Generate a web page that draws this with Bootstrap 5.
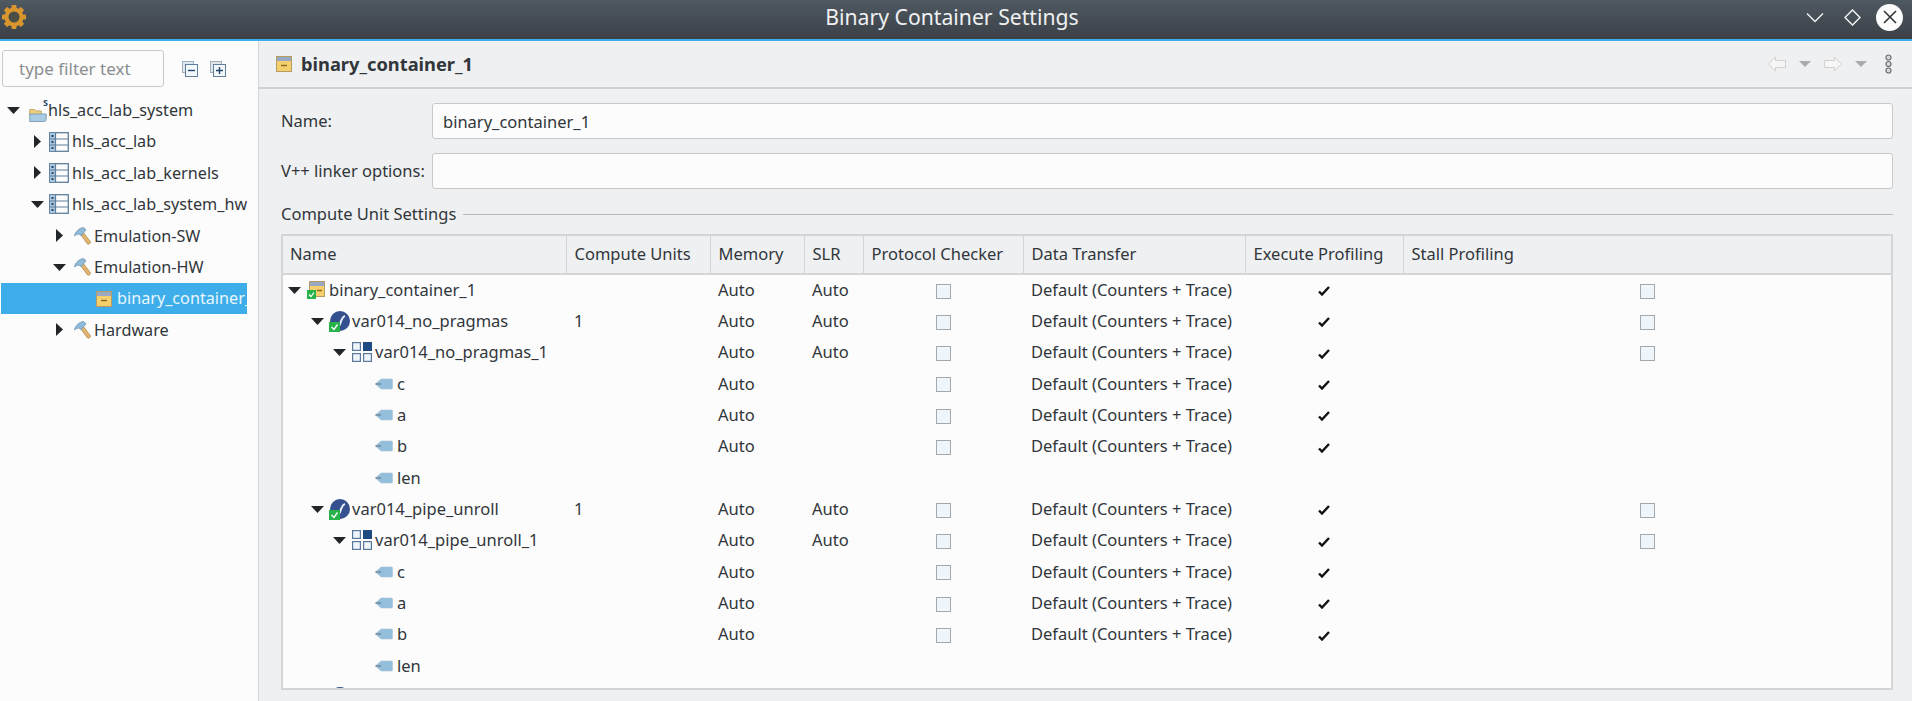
<!DOCTYPE html>
<html lang="en">
<head>
    <meta charset="UTF-8">
    <meta name="viewport" content="width=device-width, initial-scale=1.0">
    <title>Binary Container Settings</title>
    <link href="https://cdn.jsdelivr.net/npm/bootstrap@5.3.0/dist/css/bootstrap.min.css" rel="stylesheet">
    <style>
        html, body { height: 100%; }
        body { font-family: "Noto Sans", sans-serif; font-size: 16.5px; color: #31363b; background: #eff0f1; overflow: hidden; }
        .app-shell { height: 701px; }
        .title-bar { height: 41px; flex: none; padding: 0 9px 5px 1px; color: #eff0f1; border-bottom: 2px solid #3daee9; background: linear-gradient(#4f5962, #3b4046); }
        .title-text { font-size: 21.2px; margin-left: -4px; margin-top: -3px; }
        .win-close { width: 27px; height: 27px; border-radius: 50%; background: #fcfcfc; margin-left: 15px; }
        .win-max { margin-left: 20px; }
        .side-pane { width: 259px; flex: none; background: #fcfcfc; border-right: 1px solid #d4d5d6; }
        .filter-row { padding: 9px 0 0 2px; height: 53.5px; }
        .filter-input { width: 162px; height: 37px; font-size: 17px; padding: 0 0 0 16px; border: 1px solid #c8c9ca; border-radius: 3px; background: #fcfcfc; color: #31363b; }
        .filter-input::placeholder { color: #8b8e90; opacity: 1; }
        .filter-tool { margin-top: 11px; margin-left: 18px; }
        .filter-tool + .filter-tool { margin-left: 12px; }
        .tree-list { width: 246px; margin-left: 1px; overflow: hidden; font-size: 16.2px; }
        .tree-row { height: 31.4px; white-space: nowrap; overflow: hidden; }
        .tree-row svg { flex: none; }
        .tree-row.is-selected { background: #3daee9; color: #eaf6fd; }
        .tree-row.lv0 { padding-left: 6px; }
        .tree-row.lv1 { padding-left: 30px; }
        .tree-row.lv2 { padding-left: 52px; }
        .tree-row.lv3 { padding-left: 95px; }
        .tree-row.lv0 .gap-icon { margin-left: 9px; }
        .tree-row.lv1 .gap-icon { margin-left: 5px; }
        .tree-row.lv2 .gap-icon { margin-left: 8px; }
        .tree-row .gap-text { margin-left: 3px; }
        .tree-row.lv0 .gap-text { margin-left: 1px; }
        .tree-row.lv2 .gap-text { margin-left: 3px; }
        .tree-row.lv3 .gap-text { margin-left: 5px; }
        .sys-icon { width: 18px; height: 18px; flex: none; }
        .sys-badge { top: -3px; right: -1px; font-size: 9px; font-weight: 700; line-height: 1; color: #26476a; }
        .tw { width: 13px; height: 13px; flex: none; fill: #232629; }
        .main-pane { min-width: 0; }
        .editor-head { height: 48px; flex: none; padding: 0 20px 0 17px; border-bottom: 2px solid #d0d1d2; }
        .editor-title { font-weight: 700; font-size: 18.3px; margin-left: 9px; }
        .nav-tool { margin-left: 13px; }
        .nav-tool.more { margin-left: 18px; }
        .form-area { padding: 14px 19px 0 22px; }
        .field-row { height: 36px; margin-bottom: 14px; }
        .field-label { width: 151px; flex: none; margin: 0; }
        .field-input { height: 36px; font-size: 16.5px; padding: 0 10px; border: 1px solid #c8c9ca; border-radius: 3px; background: #fcfcfc; color: #31363b; box-shadow: none; }
        .group-title { height: 18px; margin-top: 16.5px; margin-bottom: 10px; }
        .group-title hr { margin: 0 0 0 7px; border-top: 1px solid #b9babb; opacity: 1; }
        .unit-box { height: 456px; background: #fcfcfc; border: 2px solid #d4d5d6; overflow: hidden; }
        .unit-table { table-layout: fixed; width: 1608px; margin: 0; color: #31363b; --bs-table-bg: transparent; --bs-table-color: #31363b; font-size: 16.5px; }
        .unit-table th { height: 38px; padding: 0 0 0 8px; font-weight: 400; background: #eff0f1; border: 0; border-right: 1px solid #d4d5d6; border-bottom: 2px solid #d4d5d6; vertical-align: middle; }
        .unit-table th:first-child { padding-left: 7px; }
        .unit-table th:last-child { border-right: 0; }
        .unit-table td { height: 31.34px; padding: 0 0 0 8px; border: 0; white-space: nowrap; vertical-align: middle; line-height: 1; }
        .unit-table td.mid { padding: 0; text-align: center; }
        .unit-table td.name-td { padding-left: 4px; }
        .name-cell { height: 31px; }
        .name-cell svg { flex: none; }
        .name-cell.lv0 { padding-left: 1px; }
        .name-cell.lv1 { padding-left: 24px; }
        .name-cell.lv2 { padding-left: 46px; }
        .name-cell.lv3 { padding-left: 88px; }
        .name-cell.lv0 .gap-icon { margin-left: 6px; }
        .name-cell.lv1 .gap-icon { margin-left: 5px; }
        .name-cell.lv2 .gap-icon { margin-left: 6px; }
        .name-cell.lv0 .gap-text { margin-left: 4px; }
        .name-cell.lv1 .gap-text { margin-left: 2px; }
        .name-cell.lv2 .gap-text { margin-left: 3px; }
        .name-cell.lv3 .gap-text { margin-left: 4px; }
        .chk-box { display: inline-block; width: 15px; height: 15px; vertical-align: middle; background: #eef6fb; border: 1px solid #a6a9ab; }
        .chk-mark { vertical-align: middle; }
    </style>
</head>
<body>
    <svg width="0" height="0" class="position-absolute">
        <symbol id="i-open" viewBox="0 0 13 13"><path d="M0 3h13L6.500 10z"/></symbol>
        <symbol id="i-closed" viewBox="0 0 13 13"><path d="M3 0l7 6.500L3 13z"/></symbol>
        <symbol id="i-hammer" viewBox="0 0 17 18">
            <path d="M6.500 7.500l2.700-2.200 7.300 9.500c.6 1-2 3.200-3 2.200z" fill="#e2b46c" stroke="#a98751" stroke-width=".7"/>
            <path d="M.5 9C1 5 5 1 9.500.5l2.500 2.200-4.700 6-2.300-1.700C3.500 7 2 7.800.5 9z" fill="#8fbcdb" stroke="#6b8da6" stroke-width=".7"/>
        </symbol>
        <symbol id="i-list" viewBox="0 0 20 20">
            <rect x=".7" y=".7" width="18.600" height="18.600" fill="#fcfcfc" stroke="#5f7f9c" stroke-width="1.300"/>
            <rect x="1" y="1" width="5" height="18" fill="#a9c7de"/>
            <path d="M6.500 1v18M1 7h18M1 13h18" stroke="#5f7f9c" stroke-width="1.200"/>
            <path d="M2.500 3h2v2h-2zM2.500 9h2v2h-2zM2.500 15h2v2h-2z" fill="#26476a"/>
        </symbol>
        <symbol id="i-box" viewBox="0 0 16 16">
            <rect x=".5" y=".5" width="15" height="15" fill="#f6cf6d" stroke="#b59c63"/>
            <rect x="1" y="1" width="14" height="4" fill="#99a9c4"/>
            <path d="M5 9.500h6" stroke="#8a6a25" stroke-width="1.500"/>
        </symbol>
        <symbol id="i-boxok" viewBox="0 0 18 18">
            <rect x="2.500" y=".5" width="15" height="15" fill="#f6cf6d" stroke="#b59c63"/>
            <rect x="3" y="1" width="14" height="4" fill="#99a9c4"/>
            <path d="M10 9.500h5" stroke="#8a6a25" stroke-width="1.500"/>
            <rect x="0" y="9" width="9" height="9" fill="#27b34a"/>
            <path d="M2 13.500l2 2 3-4" fill="none" stroke="#fff" stroke-width="1.200"/>
        </symbol>
        <symbol id="i-fn" viewBox="0 0 21 21">
            <circle cx="11" cy="10" r="10" fill="#34508f"/>
            <path d="M10 15c1.500-2 1.500-4 2.500-6s1.500-3.500 3.500-4" fill="none" stroke="#e8edf6" stroke-width="2"/>
            <rect x="0" y="11" width="11" height="10" fill="#27b34a"/>
            <path d="M2.500 16l2.500 2.500 3.500-5" fill="none" stroke="#fff" stroke-width="1.400"/>
        </symbol>
        <symbol id="i-cu" viewBox="0 0 20 20">
            <g fill="#eef6fb" stroke="#59789a" stroke-width="1.200"><rect x=".6" y=".6" width="7.800" height="7.800"/><rect x=".6" y="11.600" width="7.800" height="7.800"/><rect x="11.600" y="11.600" width="7.800" height="7.800"/></g>
            <rect x="11" y="0" width="9" height="9" fill="#1d4a80"/>
        </symbol>
        <symbol id="i-port" viewBox="0 0 18 12">
            <path d="M.5 6L6 1h10.500c.6 0 1 .4 1 1v8c0 .6-.4 1-1 1H6z" fill="#93bfdd" stroke="#a9c4d6" stroke-width=".6"/>
            <path d="M.5 6H6" stroke="#6b7d8a" stroke-width="1.200"/>
        </symbol>
        <symbol id="i-check" viewBox="0 0 12 10"><path d="M1 5.500l3 3 7-7.500" fill="none" stroke="#111" stroke-width="2.400"/></symbol>
    </svg>

    <div class="app-shell d-flex flex-column">
        <div class="title-bar d-flex align-items-center position-relative">
            <svg width="26" height="26" viewBox="0 0 26 26">
                <g fill="#d9962e">
                    <circle cx="13" cy="13" r="9.500"/>
                    <rect x="10.500" y="1" width="5" height="24" rx="1"/>
                    <rect x="1" y="10.500" width="24" height="5" rx="1"/>
                    <rect x="10.500" y="1" width="5" height="24" rx="1" transform="rotate(45 13 13)"/>
                    <rect x="10.500" y="1" width="5" height="24" rx="1" transform="rotate(-45 13 13)"/>
                </g>
                <circle cx="13" cy="13" r="5.500" fill="#4a4f45"/>
            </svg>
            <div class="title-text position-absolute top-50 start-50 translate-middle text-nowrap">Binary Container Settings</div>
            <div class="ms-auto d-flex align-items-center">
                <svg width="18" height="11" viewBox="0 0 18 11"><path d="M1 1.500l8 8 8-8" fill="none" stroke="#eff0f1" stroke-width="1.500"/></svg>
                <svg class="win-max" width="17" height="17" viewBox="0 0 17 17"><path d="M8.500 1L16 8.500 8.500 16 1 8.500z" fill="none" stroke="#eff0f1" stroke-width="1.500"/></svg>
                <div class="win-close d-flex align-items-center justify-content-center">
                    <svg width="14" height="14" viewBox="0 0 14 14"><path d="M1 1l12 12M13 1L1 13" stroke="#31363b" stroke-width="1.600"/></svg>
                </div>
            </div>
        </div>

        <div class="d-flex flex-grow-1 overflow-hidden">
            <div class="side-pane">
                <div class="filter-row d-flex align-items-start">
                    <input class="filter-input" type="text" placeholder="type filter text">
                    <svg class="filter-tool" width="16" height="16" viewBox="0 0 16 16">
                        <rect x=".5" y=".5" width="11" height="11" fill="#dfe6ec" stroke="#9fb0bf"/>
                        <rect x="3.500" y="3.500" width="12" height="12" fill="#f3f8fb" stroke="#5f7f9c"/>
                        <path d="M6 9.500h7" stroke="#26476a" stroke-width="1.400"/>
                    </svg>
                    <svg class="filter-tool" width="16" height="16" viewBox="0 0 16 16">
                        <rect x=".5" y=".5" width="11" height="11" fill="#dfe6ec" stroke="#9fb0bf"/>
                        <rect x="3.500" y="3.500" width="12" height="12" fill="#f3f8fb" stroke="#5f7f9c"/>
                        <path d="M6 9.500h7M9.500 6v7" stroke="#26476a" stroke-width="1.400"/>
                    </svg>
                </div>
                <div class="tree-list">
                    <div class="tree-row lv0 d-flex align-items-center"><svg class="tw"><use href="#i-open"/></svg><div class="sys-icon gap-icon position-relative"><svg width="18" height="18" viewBox="0 0 18 18"><path d="M.7 3.500h5l1.500 1.500h5v4H.7z" fill="#f0cf7c" stroke="#b99a50" stroke-width=".8"/><path d="M.7 15.500V8h16.500v5.500c0 1.200-.8 2-2 2z" fill="#a9cbe4" stroke="#7094b0" stroke-width=".8"/></svg><span class="sys-badge position-absolute">S</span></div><span class="gap-text">hls_acc_lab_system</span></div>
                    <div class="tree-row lv1 d-flex align-items-center"><svg class="tw"><use href="#i-closed"/></svg><svg class="gap-icon" width="20" height="20"><use href="#i-list"/></svg><span class="gap-text">hls_acc_lab</span></div>
                    <div class="tree-row lv1 d-flex align-items-center"><svg class="tw"><use href="#i-closed"/></svg><svg class="gap-icon" width="20" height="20"><use href="#i-list"/></svg><span class="gap-text">hls_acc_lab_kernels</span></div>
                    <div class="tree-row lv1 d-flex align-items-center"><svg class="tw"><use href="#i-open"/></svg><svg class="gap-icon" width="20" height="20"><use href="#i-list"/></svg><span class="gap-text">hls_acc_lab_system_hw</span></div>
                    <div class="tree-row lv2 d-flex align-items-center"><svg class="tw"><use href="#i-closed"/></svg><svg class="gap-icon" width="17" height="18"><use href="#i-hammer"/></svg><span class="gap-text">Emulation-SW</span></div>
                    <div class="tree-row lv2 d-flex align-items-center"><svg class="tw"><use href="#i-open"/></svg><svg class="gap-icon" width="17" height="18"><use href="#i-hammer"/></svg><span class="gap-text">Emulation-HW</span></div>
                    <div class="tree-row lv3 is-selected d-flex align-items-center"><svg width="16" height="16"><use href="#i-box"/></svg><span class="gap-text">binary_container_1</span></div>
                    <div class="tree-row lv2 d-flex align-items-center"><svg class="tw"><use href="#i-closed"/></svg><svg class="gap-icon" width="17" height="18"><use href="#i-hammer"/></svg><span class="gap-text">Hardware</span></div>
                </div>
            </div>

            <div class="main-pane flex-grow-1 d-flex flex-column">
                <div class="editor-head d-flex align-items-center">
                    <svg width="16" height="16"><use href="#i-box"/></svg>
                    <span class="editor-title">binary_container_1</span>
                    <div class="ms-auto d-flex align-items-center">
                        <svg width="18" height="16" viewBox="0 0 18 16"><path d="M.5 8l7-7v3.500h10v7h-10V15z" fill="#f6f6f6" stroke="#d0d1d2"/></svg>
                        <svg class="nav-tool" width="12" height="6" viewBox="0 0 12 6"><path d="M0 0h12L6 6z" fill="#a9abad"/></svg>
                        <svg class="nav-tool" width="18" height="16" viewBox="0 0 18 16"><path d="M17.500 8l-7-7v3.500H.5v7h10V15z" fill="#f6f6f6" stroke="#d0d1d2"/></svg>
                        <svg class="nav-tool" width="12" height="6" viewBox="0 0 12 6"><path d="M0 0h12L6 6z" fill="#a9abad"/></svg>
                        <svg class="nav-tool more" width="7" height="20" viewBox="0 0 7 20"><g fill="#d9dadb" stroke="#6b6e70" stroke-width="1.200"><circle cx="3.500" cy="3.500" r="2.500"/><circle cx="3.500" cy="10" r="2.500"/><circle cx="3.500" cy="16.500" r="2.500"/></g></svg>
                    </div>
                </div>
                <div class="form-area flex-grow-1">
                    <div class="field-row d-flex align-items-center">
                        <label class="field-label">Name:</label>
                        <input class="form-control field-input" type="text" value="binary_container_1">
                    </div>
                    <div class="field-row d-flex align-items-center">
                        <label class="field-label">V++ linker options:</label>
                        <input class="form-control field-input" type="text">
                    </div>
                    <div class="group-title d-flex align-items-center">
                        <span class="text-nowrap">Compute Unit Settings</span>
                        <hr class="flex-grow-1">
                    </div>
                    <div class="unit-box">
                        <table class="table unit-table">
                            <colgroup>
                                <col style="width:283px"><col style="width:144px"><col style="width:94px"><col style="width:59px"><col style="width:160px"><col style="width:222px"><col style="width:158px"><col>
                            </colgroup>
                            <thead>
                                <tr><th>Name</th><th>Compute Units</th><th>Memory</th><th>SLR</th><th>Protocol Checker</th><th>Data Transfer</th><th>Execute Profiling</th><th>Stall Profiling</th></tr>
                            </thead>
                            <tbody>
                                <tr><td class="name-td"><div class="name-cell lv0 d-flex align-items-center"><svg class="tw"><use href="#i-open"/></svg><svg class="gap-icon" width="18" height="18"><use href="#i-boxok"/></svg><span class="gap-text">binary_container_1</span></div></td><td></td><td>Auto</td><td>Auto</td><td class="mid"><span class="chk-box"></span></td><td>Default (Counters + Trace)</td><td class="mid"><svg class="chk-mark" width="12" height="10"><use href="#i-check"/></svg></td><td class="mid"><span class="chk-box"></span></td></tr>
                                <tr><td class="name-td"><div class="name-cell lv1 d-flex align-items-center"><svg class="tw"><use href="#i-open"/></svg><svg class="gap-icon" width="21" height="21"><use href="#i-fn"/></svg><span class="gap-text">var014_no_pragmas</span></div></td><td>1</td><td>Auto</td><td>Auto</td><td class="mid"><span class="chk-box"></span></td><td>Default (Counters + Trace)</td><td class="mid"><svg class="chk-mark" width="12" height="10"><use href="#i-check"/></svg></td><td class="mid"><span class="chk-box"></span></td></tr>
                                <tr><td class="name-td"><div class="name-cell lv2 d-flex align-items-center"><svg class="tw"><use href="#i-open"/></svg><svg class="gap-icon" width="20" height="20"><use href="#i-cu"/></svg><span class="gap-text">var014_no_pragmas_1</span></div></td><td></td><td>Auto</td><td>Auto</td><td class="mid"><span class="chk-box"></span></td><td>Default (Counters + Trace)</td><td class="mid"><svg class="chk-mark" width="12" height="10"><use href="#i-check"/></svg></td><td class="mid"><span class="chk-box"></span></td></tr>
                                <tr><td class="name-td"><div class="name-cell lv3 d-flex align-items-center"><svg width="18" height="12"><use href="#i-port"/></svg><span class="gap-text">c</span></div></td><td></td><td>Auto</td><td></td><td class="mid"><span class="chk-box"></span></td><td>Default (Counters + Trace)</td><td class="mid"><svg class="chk-mark" width="12" height="10"><use href="#i-check"/></svg></td><td></td></tr>
                                <tr><td class="name-td"><div class="name-cell lv3 d-flex align-items-center"><svg width="18" height="12"><use href="#i-port"/></svg><span class="gap-text">a</span></div></td><td></td><td>Auto</td><td></td><td class="mid"><span class="chk-box"></span></td><td>Default (Counters + Trace)</td><td class="mid"><svg class="chk-mark" width="12" height="10"><use href="#i-check"/></svg></td><td></td></tr>
                                <tr><td class="name-td"><div class="name-cell lv3 d-flex align-items-center"><svg width="18" height="12"><use href="#i-port"/></svg><span class="gap-text">b</span></div></td><td></td><td>Auto</td><td></td><td class="mid"><span class="chk-box"></span></td><td>Default (Counters + Trace)</td><td class="mid"><svg class="chk-mark" width="12" height="10"><use href="#i-check"/></svg></td><td></td></tr>
                                <tr><td class="name-td"><div class="name-cell lv3 d-flex align-items-center"><svg width="18" height="12"><use href="#i-port"/></svg><span class="gap-text">len</span></div></td><td></td><td></td><td></td><td></td><td></td><td></td><td></td></tr>
                                <tr><td class="name-td"><div class="name-cell lv1 d-flex align-items-center"><svg class="tw"><use href="#i-open"/></svg><svg class="gap-icon" width="21" height="21"><use href="#i-fn"/></svg><span class="gap-text">var014_pipe_unroll</span></div></td><td>1</td><td>Auto</td><td>Auto</td><td class="mid"><span class="chk-box"></span></td><td>Default (Counters + Trace)</td><td class="mid"><svg class="chk-mark" width="12" height="10"><use href="#i-check"/></svg></td><td class="mid"><span class="chk-box"></span></td></tr>
                                <tr><td class="name-td"><div class="name-cell lv2 d-flex align-items-center"><svg class="tw"><use href="#i-open"/></svg><svg class="gap-icon" width="20" height="20"><use href="#i-cu"/></svg><span class="gap-text">var014_pipe_unroll_1</span></div></td><td></td><td>Auto</td><td>Auto</td><td class="mid"><span class="chk-box"></span></td><td>Default (Counters + Trace)</td><td class="mid"><svg class="chk-mark" width="12" height="10"><use href="#i-check"/></svg></td><td class="mid"><span class="chk-box"></span></td></tr>
                                <tr><td class="name-td"><div class="name-cell lv3 d-flex align-items-center"><svg width="18" height="12"><use href="#i-port"/></svg><span class="gap-text">c</span></div></td><td></td><td>Auto</td><td></td><td class="mid"><span class="chk-box"></span></td><td>Default (Counters + Trace)</td><td class="mid"><svg class="chk-mark" width="12" height="10"><use href="#i-check"/></svg></td><td></td></tr>
                                <tr><td class="name-td"><div class="name-cell lv3 d-flex align-items-center"><svg width="18" height="12"><use href="#i-port"/></svg><span class="gap-text">a</span></div></td><td></td><td>Auto</td><td></td><td class="mid"><span class="chk-box"></span></td><td>Default (Counters + Trace)</td><td class="mid"><svg class="chk-mark" width="12" height="10"><use href="#i-check"/></svg></td><td></td></tr>
                                <tr><td class="name-td"><div class="name-cell lv3 d-flex align-items-center"><svg width="18" height="12"><use href="#i-port"/></svg><span class="gap-text">b</span></div></td><td></td><td>Auto</td><td></td><td class="mid"><span class="chk-box"></span></td><td>Default (Counters + Trace)</td><td class="mid"><svg class="chk-mark" width="12" height="10"><use href="#i-check"/></svg></td><td></td></tr>
                                <tr><td class="name-td"><div class="name-cell lv3 d-flex align-items-center"><svg width="18" height="12"><use href="#i-port"/></svg><span class="gap-text">len</span></div></td><td></td><td></td><td></td><td></td><td></td><td></td><td></td></tr>
                                <tr><td class="name-td"><div class="name-cell lv1 d-flex align-items-center"><svg class="tw"><use href="#i-open"/></svg><svg class="gap-icon" width="21" height="21"><use href="#i-fn"/></svg></div></td><td></td><td></td><td></td><td></td><td></td><td></td><td></td></tr>
                            </tbody>
                        </table>
                    </div>
                </div>
            </div>
        </div>
    </div>
    <script src="https://cdn.jsdelivr.net/npm/bootstrap@5.3.0/dist/js/bootstrap.bundle.min.js"></script>
</body>
</html>
